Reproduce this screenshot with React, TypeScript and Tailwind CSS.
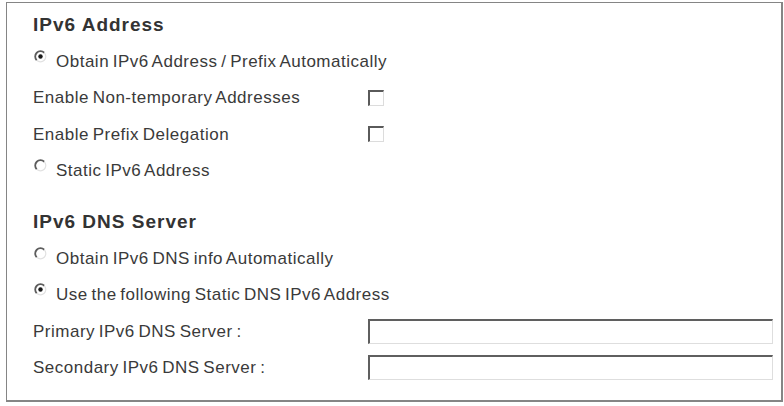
import React from "react";

const font = { fontFamily: '"Liberation Sans", Arial, sans-serif' };

function Radio({ checked }: { checked?: boolean }) {
  return (
    <svg width="13" height="13" viewBox="0 0 13 13" className="mb-[10px] ml-[1px] mr-[9px] shrink-0">
      <circle cx="6.5" cy="6.5" r="5.3" fill="#fff" />
      <path d="M2.75 10.25 A5.3 5.3 0 0 1 10.25 2.75" fill="none" stroke="#5c5c5c" strokeWidth="1.8" />
      <path d="M10.25 2.75 A5.3 5.3 0 0 1 2.75 10.25" fill="none" stroke="#e2e2e2" strokeWidth="1.2" />
      {checked && <circle cx="6.5" cy="6.5" r="2.2" fill="#1a1a1a" />}
    </svg>
  );
}

function Checkbox() {
  return (
    <div className="h-[16px] w-[16px] border-t-2 border-l-2 border-r border-b border-t-[#5a5a5a] border-l-[#5a5a5a] border-r-[#dcdcdc] border-b-[#dcdcdc] bg-white" />
  );
}

function TextBox() {
  return (
    <div className="h-[25px] w-[405px] border-t-2 border-l-2 border-r border-b border-t-[#5f5f5f] border-l-[#5f5f5f] border-r-[#dedede] border-b-[#dedede] bg-white" />
  );
}

function Heading({ children }: { children: React.ReactNode }) {
  return (
    <div className="flex h-[36px] items-center text-[19px] font-bold tracking-[1px] [word-spacing:0px] text-[#333]">
      {children}
    </div>
  );
}

function RadioRow({ label, checked }: { label: string; checked?: boolean }) {
  return (
    <div className="flex h-[36.5px] items-center">
      <Radio checked={checked} />
      <span>{label}</span>
    </div>
  );
}

function FieldRow({ label, children }: { label: string; children: React.ReactNode }) {
  return (
    <div className="flex h-[36.5px] items-center">
      <span className="w-[335px] shrink-0">{label}</span>
      {children}
    </div>
  );
}

export default function App() {
  return (
    <div className="h-[406px] w-[784px] bg-white pl-[6px] pt-[2px]" style={font}>
      <div className="flex h-[400px] w-[777px] flex-col border-t border-l border-r-2 border-b-2 border-[#858585] pl-[26px] pt-[4px] text-[17px] tracking-[0.5px] [word-spacing:-1.5px] text-[#3a3a3a]">
        <Heading>IPv6 Address</Heading>
        <RadioRow checked label="Obtain IPv6 Address / Prefix Automatically" />
        <FieldRow label="Enable Non-temporary Addresses">
          <Checkbox />
        </FieldRow>
        <FieldRow label="Enable Prefix Delegation">
          <Checkbox />
        </FieldRow>
        <RadioRow label="Static IPv6 Address" />

        <div className="mt-[15px]">
          <Heading>IPv6 DNS Server</Heading>
        </div>
        <RadioRow label="Obtain IPv6 DNS info Automatically" />
        <RadioRow checked label="Use the following Static DNS IPv6 Address" />
        <FieldRow label="Primary IPv6 DNS Server :">
          <TextBox />
        </FieldRow>
        <FieldRow label="Secondary IPv6 DNS Server :">
          <TextBox />
        </FieldRow>
      </div>
    </div>
  );
}
